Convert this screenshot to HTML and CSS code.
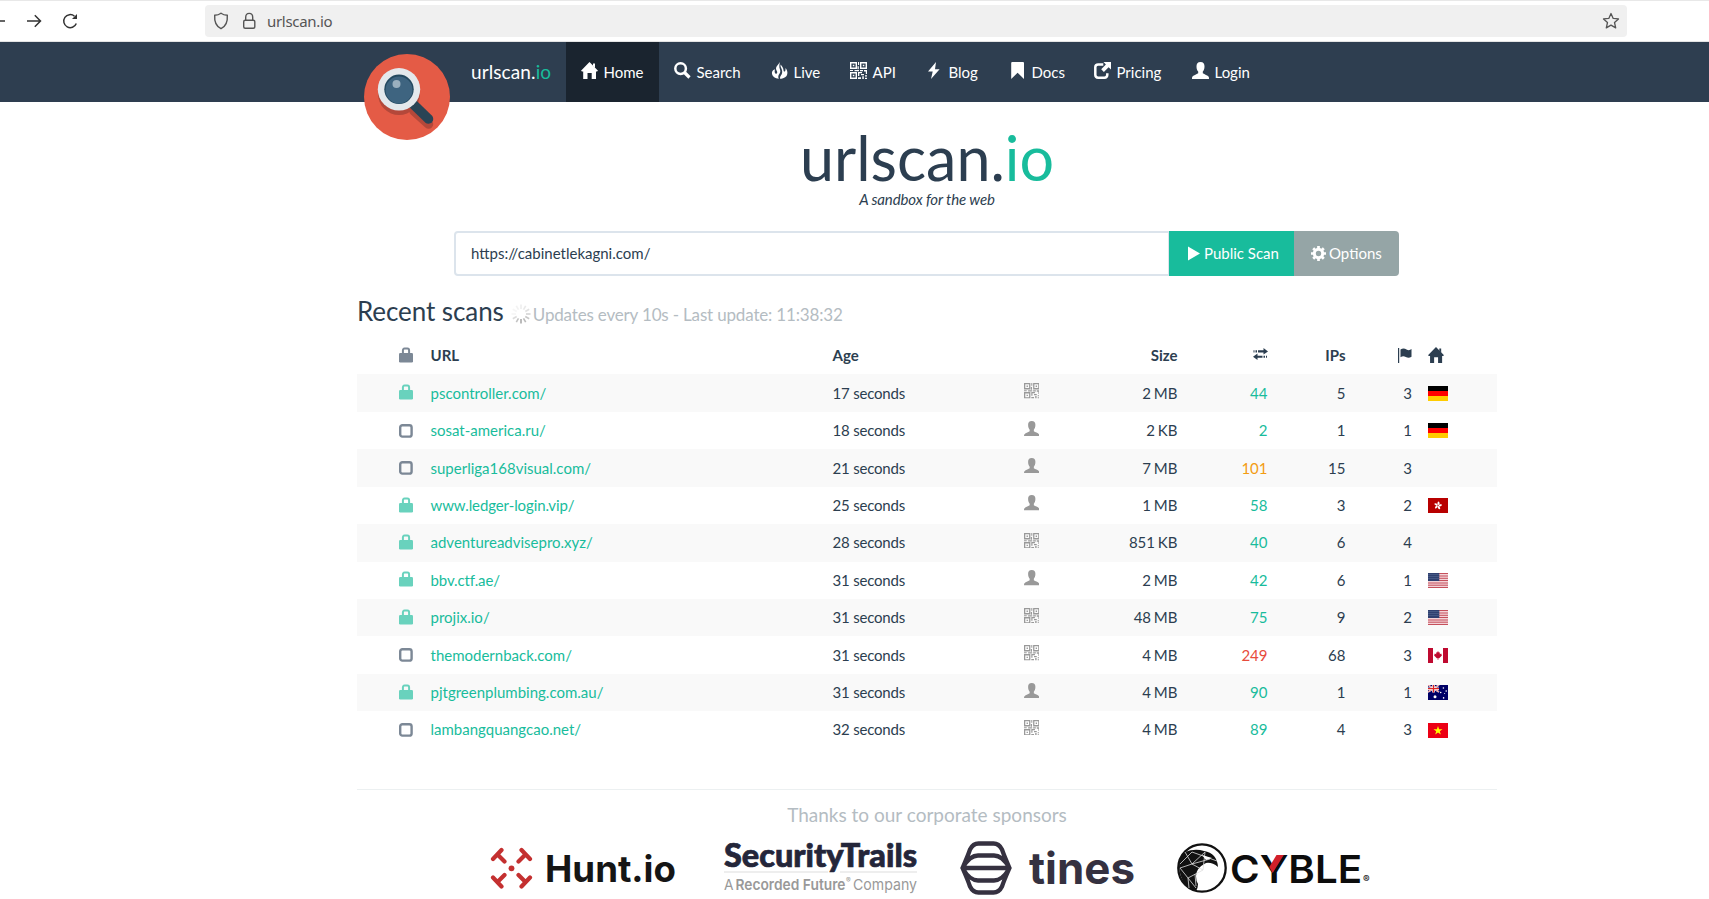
FILE: index.html
```html
<!DOCTYPE html>
<html lang="en">
<head>
<meta charset="utf-8">
<title>urlscan.io</title>
<link rel="stylesheet" href="styles.css">
</head>
<body>
<svg class="sprite" aria-hidden="true">
  <symbol id="home" viewBox="0 0 17 17"><path d="M8.500 0 17 8.800l-1 .7h-1V17h-4.300v-6H6.500v6H2.200V9.500H1L0 8.800z"/><path d="M12 1.500h2v4.500l-2-2z"/></symbol>
  <symbol id="search" viewBox="0 0 17 17"><circle cx="6.600" cy="6.600" r="5.300" fill="none" stroke="currentColor" stroke-width="2.500"/><path d="M10.500 10.500l5 5" stroke="currentColor" stroke-width="3.200"/></symbol>
  <symbol id="fire" viewBox="0 0 17 17"><path d="M9 0C7.500 2.600 4.800 4.400 5 6.800c.1 1.500 1.400 2.200 1.200 3.900C6 11.800 5 12.200 4.200 11.300c-.7-.9-.6-2.300-.2-4.100C1.600 8 .6 9.800 1 12c.5 2.700 3 4.300 6.800 4.700C6.900 15 7.300 13.300 8.300 12c1-1.300 1.400-2.700.6-4.700C8 5 8.300 2.500 9 0z"/><path d="M9.600 2.500c-.5 2.300.7 3.300 1.200 5 .8 2.300.4 4.300-.9 6-.9 1.400-1.100 2.100-.5 3.400 4-.3 6.400-2 6.900-4.800.5-2.600-.5-4.500-1.700-6.100-.1 1.400 0 3-.8 3.500-.8.400-1.300-.4-1.300-1.700C12.200 5.700 11 4 9.600 2.500z"/></symbol>
  <symbol id="qr" viewBox="0 0 17 17"><path fill-rule="evenodd" d="M0 0h7v7H0zM1.400 1.400v4.200h4.200V1.400zM2.800 2.800h1.500v1.500H2.800zM10 0h7v7h-7zM11.400 1.400v4.200h4.200V1.400zM12.800 2.800h1.500v1.500h-1.500zM0 10h7v7H0zM1.400 11.400v4.200h4.200v-4.200zM2.800 12.800h1.500v1.500H2.800zM8 0h1.100v3H8zM7.500 4.300h1.300v3H7.500zM0 8h3v1H0zM4.500 8H9v1.200H4.500zM8 10h4v1.300H9.300V14H8zM10 8h3v1.200h-3zM14 8h3v4h-1.200V9.500H14zM11 12h3v1.300h-3zM8 15.300h3V17H8zM12.300 14.300h1.500V17h-1.500zM15 13.300h2v1.200h-2zM15 15.700h2V17h-2z"/></symbol>
  <symbol id="bolt" viewBox="0 0 17 17"><path d="M10 0 2 9.500h4.700L5 17l8.600-9.800H9z"/></symbol>
  <symbol id="mark" viewBox="0 0 17 17"><path d="M2.200 1Q2.200 0 3.200 0H14q1 0 1 1v16l-6.400-6.200L2.200 17z"/></symbol>
  <symbol id="share" viewBox="0 0 17 17"><path d="M9.300 2.400H4.100Q1.300 2.400 1.300 5.200v7.600q0 2.900 2.900 2.900h6.200q2.900 0 2.900-2.900v-1.600" fill="none" stroke="currentColor" stroke-width="2.500"/><path d="M9.500 0H17v7.600l-2.400-2.400-4.700 4.700-2.700-2.700 4.700-4.700z"/></symbol>
  <symbol id="user" viewBox="0 0 17 17"><path d="M8.500 0C11.400 0 12.600 1.900 12.500 4.400c0 2.500-.7 3.900-1.700 5.200v1.700c1.600 1.100 5 2.100 5.900 3.400.3.600.3 2.300.3 2.300H0s0-1.700.3-2.300c.9-1.300 4.300-2.300 5.900-3.400V9.600C5.200 8.300 4.500 6.900 4.500 4.400 4.400 1.900 5.600 0 8.500 0z"/></symbol>
  <symbol id="lock" viewBox="0 0 14 16"><path d="M3.900 6.500V3.500Q3.900 1.600 5.500 1.600h3Q10.100 1.600 10.100 3.500v3" fill="none" stroke="currentColor" stroke-width="2"/><path d="M0 7.300Q0 6 1.200 6h11.600Q14 6 14 7.300v6.900q0 1.200-1.200 1.200H1.200Q0 15.400 0 14.200z"/></symbol>
  <symbol id="open" viewBox="0 0 14 14"><rect x="1.200" y="1.200" width="11.400" height="11.400" rx="2.200" fill="none" stroke="currentColor" stroke-width="2.400"/></symbol>
  <symbol id="transfer" viewBox="0 0 15 12"><path d="M.5 2.300h1v2.200h-1zM2.500 2.300H4v2.200H2.500zM5 2.300h5.500V0L15 3.400l-4.500 3.200V4.500H5zM14 7.700h-1v2.100h1zM12 7.700h-1.500v2.100H12zM9.500 9.800H4.500V12L0 8.700l4.500-3.200v2.200h5z"/></symbol>
  <symbol id="flag" viewBox="0 0 14 15"><path d="M0 0h1.200v15H0zM2.500 1.500c2-1.200 4-1.300 6 0s3.500.8 5-.4v7.600c-2 1.300-3.700 1.300-5.700.2-2-1-3.500-.8-5.300.3z"/></symbol>
  <symbol id="de" viewBox="0 0 20 15"><path d="M0 0h20v5H0z" fill="#000"/><path d="M0 5h20v5H0z" fill="#f00"/><path d="M0 10h20v5H0z" fill="#fc0"/></symbol>
  <symbol id="hk" viewBox="0 0 20 15"><path d="M0 0h20v15H0z" fill="#b80000"/><g fill="#fff"><ellipse cx="10.500" cy="5.300" rx="1" ry="1.800"/><ellipse cx="10.500" cy="5.300" rx="1" ry="1.800" transform="rotate(72 10 7.500)"/><ellipse cx="10.500" cy="5.300" rx="1" ry="1.800" transform="rotate(144 10 7.500)"/><ellipse cx="10.500" cy="5.300" rx="1" ry="1.800" transform="rotate(216 10 7.500)"/><ellipse cx="10.500" cy="5.300" rx="1" ry="1.800" transform="rotate(288 10 7.500)"/></g></symbol>
  <symbol id="us" viewBox="0 0 20 15"><path d="M0 0h20v15H0z" fill="#f3d3d8"/><path d="M0 .5h20M0 3h20M0 5.300h20M0 7.500h20M0 10h20M0 12.200h20M0 14.500h20" stroke="#c5505c"/><path d="M0 0h11.300v8H0z" fill="#304070"/><path d="M.5 1.500h10.500M.5 3.500h10.500M.5 5.500h10.500" stroke="#5b7198" stroke-dasharray="1 1"/></symbol>
  <symbol id="ca" viewBox="0 0 20 15"><path d="M0 0h20v15H0z" fill="#fff"/><path d="M0 0h5v15H0zM15 0h5v15h-5zM10 3l1 1.700 1-.4-.3 2 1.500-.8.700 1.900-2.700 2.800H10.300V12h-.600v-1.800H8.800L6.100 7.400l.7-1.900 1.500.8-.3-2 1 .4z" fill="#bf0a30"/></symbol>
  <symbol id="au" viewBox="0 0 20 15"><path d="M0 0h20v15H0z" fill="#006"/><path d="M0 0l11 7M11 0L0 7" stroke="#fff" stroke-width="1.600"/><path d="M0 0l11 7M11 0L0 7" stroke="#d33" stroke-width=".6"/><path d="M5.500 0v7.500M0 3.700h11" stroke="#fff" stroke-width="2.600"/><path d="M5.500 0v7.500M0 3.700h11" stroke="#d22" stroke-width="1.300"/><g fill="#fff"><circle cx="7" cy="11.700" r="1.500"/><circle cx="15.400" cy="3" r=".8"/><circle cx="12.700" cy="7.500" r=".8"/><circle cx="18.200" cy="6" r=".8"/><circle cx="15.600" cy="12.900" r=".8"/><circle cx="16.600" cy="8.600" r=".5"/></g></symbol>
  <symbol id="vn" viewBox="0 0 20 15"><path d="M0 0h20v15H0z" fill="#ec0015"/><path d="M10 3l1.100 3.300h3.400l-2.700 2 1 3.300-2.800-2-2.800 2 1-3.300-2.700-2h3.400z" fill="#ff0"/></symbol>
</svg>

<header class="browser">
  <div class="browser-nav">
    <svg width="80" height="20" viewBox="0 0 80 20" fill="none" stroke="#333" stroke-width="1.500"><path d="M0 10h5M27 10h13.500M34.800 4.300l5.700 5.700-5.700 5.700"/><path d="M76.300 12.500A6.500 6.500 0 1 1 74.500 5.200"/><path d="M77 3v5h-5z" fill="#333" stroke="none"/></svg>
  </div>
  <div class="address">
    <svg width="44" height="18" viewBox="0 0 44 18" fill="none" stroke="#555" stroke-width="1.400"><path d="M8 1.200c2 1.500 4.200 2 6.300 2.100C14.800 10 12 14.800 8 16.700 4 14.800 1.200 10 1.700 3.300 3.800 3.200 6 2.700 8 1.200z"/><rect x="30.700" y="8.200" width="11.100" height="8.100" rx="1.500"/><path d="M32.700 8V5.200q0-3.800 3.500-3.800t3.500 3.800V8"/></svg>
    <span class="address-text">urlscan.io</span>
    <svg class="star" width="18" height="18" viewBox="0 0 18 18" fill="none" stroke="#555" stroke-width="1.300" stroke-linejoin="round"><path d="M9 1.500l2.200 4.900 5.300.5-4 3.600 1.200 5.400L9 13.100l-4.700 2.800 1.200-5.400-4-3.600 5.300-.5z"/></svg>
  </div>
</header>

<nav class="navbar">
  <div class="logo-slot">
    <svg class="logo" width="86" height="86" viewBox="0 0 86 86"><circle cx="43" cy="43" r="43" fill="#e45b46"/><path d="M50 57l14.500 13" stroke="#b4483a" stroke-width="9.500" stroke-linecap="round"/><circle cx="35" cy="40" r="21" fill="#b4483a"/><path d="M48 49l16.500 16" stroke="#294455" stroke-width="9.500" stroke-linecap="round"/><circle cx="35" cy="35.300" r="21.200" fill="#e4e8ec"/><circle cx="35" cy="35.300" r="14.700" fill="#23485f"/><circle cx="35" cy="36" r="13.500" fill="#3e6480"/><circle cx="32.500" cy="30" r="4" fill="#9bb0bf"/></svg>
  </div>
  <a class="brand">urlscan.<b>io</b></a>
  <a class="item active w-home"><svg class="gi"><use href="#home"/></svg>Home</a>
  <a class="item w-search"><svg class="gi"><use href="#search"/></svg>Search</a>
  <a class="item w-live"><svg class="gi"><use href="#fire"/></svg>Live</a>
  <a class="item w-api"><svg class="gi"><use href="#qr"/></svg>API</a>
  <a class="item w-blog"><svg class="gi"><use href="#bolt"/></svg>Blog</a>
  <a class="item w-docs"><svg class="gi"><use href="#mark"/></svg>Docs</a>
  <a class="item w-pricing"><svg class="gi"><use href="#share"/></svg>Pricing</a>
  <a class="item"><svg class="gi"><use href="#user"/></svg>Login</a>
</nav>

<main class="container">
  <h1 class="title">urlscan.<span>io</span></h1>
  <p class="tagline">A sandbox for the web</p>
  <form class="scan">
    <div class="url-input">https://cabinetlekagni.com/</div>
    <div class="btn primary"><svg width="12" height="15" viewBox="0 0 12 15"><path d="M0 .5 12 7.500 0 14.500z"/></svg>Public Scan</div>
    <div class="btn options"><svg width="15" height="15" viewBox="0 0 15 15"><circle cx="7.500" cy="7.500" r="4.200" fill="none" stroke="currentColor" stroke-width="3"/><path d="M7.500 0v3M7.500 12v3M0 7.500h3M12 7.500h3M2.200 2.200l2 2M10.800 10.800l2 2M2.200 12.800l2-2M10.800 4.200l2-2" stroke="currentColor" stroke-width="2.700"/></svg>Options</div>
  </form>

  <h2 class="heading">Recent scans
    <svg class="spinner" width="20" height="20" viewBox="-10 -10 20 20" stroke="#aaa" stroke-width="1.600"><path d="M0-5v-4.500" opacity=".2"/><path d="M2.500-4.300 4.700-8.200" opacity=".25"/><path d="M4.300-2.500 8.200-4.700" opacity=".35"/><path d="M5 0h4.500" opacity=".5"/><path d="M4.300 2.500 8.200 4.700" opacity=".65"/><path d="M2.500 4.300 4.700 8.200" opacity=".8"/><path d="M0 5v4.500"/><path d="M-2.500 4.300-4.700 8.200" opacity=".7"/><path d="M-4.300 2.500-8.200 4.700" opacity=".4"/><path d="M-5 0h-4.500" opacity=".1"/><path d="M-4.300-2.500-8.200-4.700" opacity=".1"/><path d="M-2.500-4.300-4.700-8.200" opacity=".15"/></svg><small>Updates every 10s - Last update: 11:38:32</small></h2>

  <div class="table">
    <div class="row head"><i><svg class="lock gray"><use href="#lock"/></svg></i><span>URL</span><span>Age</span><i></i><span class="num">Size</span><span class="num"><svg class="transfer"><use href="#transfer"/></svg></span><span class="num">IPs</span><span class="num"><svg class="pennant"><use href="#flag"/></svg></span><span><svg class="house"><use href="#home"/></svg></span></div>
    <div class="row"><i><svg class="lock"><use href="#lock"/></svg></i><a>pscontroller.com/</a><span class="age">17 seconds</span><i><svg class="src"><use href="#qr"/></svg></i><span class="num">2 MB</span><span class="num ok">44</span><span class="num">5</span><span class="num">3</span><span><svg class="flag"><use href="#de"/></svg></span></div>
    <div class="row"><i><svg class="open"><use href="#open"/></svg></i><a>sosat-america.ru/</a><span class="age">18 seconds</span><i><svg class="src"><use href="#user"/></svg></i><span class="num">2 KB</span><span class="num ok">2</span><span class="num">1</span><span class="num">1</span><span><svg class="flag"><use href="#de"/></svg></span></div>
    <div class="row"><i><svg class="open"><use href="#open"/></svg></i><a>superliga168visual.com/</a><span class="age">21 seconds</span><i><svg class="src"><use href="#user"/></svg></i><span class="num">7 MB</span><span class="num warn">101</span><span class="num">15</span><span class="num">3</span><span></span></div>
    <div class="row"><i><svg class="lock"><use href="#lock"/></svg></i><a class="snug">www.ledger-login.vip/</a><span class="age">25 seconds</span><i><svg class="src"><use href="#user"/></svg></i><span class="num">1 MB</span><span class="num ok">58</span><span class="num">3</span><span class="num">2</span><span><svg class="flag"><use href="#hk"/></svg></span></div>
    <div class="row"><i><svg class="lock"><use href="#lock"/></svg></i><a>adventureadvisepro.xyz/</a><span class="age">28 seconds</span><i><svg class="src"><use href="#qr"/></svg></i><span class="num">851 KB</span><span class="num ok">40</span><span class="num">6</span><span class="num">4</span><span></span></div>
    <div class="row"><i><svg class="lock"><use href="#lock"/></svg></i><a class="snug">bbv.ctf.ae/</a><span class="age">31 seconds</span><i><svg class="src"><use href="#user"/></svg></i><span class="num">2 MB</span><span class="num ok">42</span><span class="num">6</span><span class="num">1</span><span><svg class="flag"><use href="#us"/></svg></span></div>
    <div class="row"><i><svg class="lock"><use href="#lock"/></svg></i><a>projix.io/</a><span class="age">31 seconds</span><i><svg class="src"><use href="#qr"/></svg></i><span class="num">48 MB</span><span class="num ok">75</span><span class="num">9</span><span class="num">2</span><span><svg class="flag"><use href="#us"/></svg></span></div>
    <div class="row"><i><svg class="open"><use href="#open"/></svg></i><a>themodernback.com/</a><span class="age">31 seconds</span><i><svg class="src"><use href="#qr"/></svg></i><span class="num">4 MB</span><span class="num bad">249</span><span class="num">68</span><span class="num">3</span><span><svg class="flag"><use href="#ca"/></svg></span></div>
    <div class="row"><i><svg class="lock"><use href="#lock"/></svg></i><a>pjtgreenplumbing.com.au/</a><span class="age">31 seconds</span><i><svg class="src"><use href="#user"/></svg></i><span class="num">4 MB</span><span class="num ok">90</span><span class="num">1</span><span class="num">1</span><span><svg class="flag"><use href="#au"/></svg></span></div>
    <div class="row"><i><svg class="open"><use href="#open"/></svg></i><a>lambangquangcao.net/</a><span class="age">32 seconds</span><i><svg class="src"><use href="#qr"/></svg></i><span class="num">4 MB</span><span class="num ok">89</span><span class="num">4</span><span class="num">3</span><span><svg class="flag"><use href="#vn"/></svg></span></div>
  </div>

  <footer class="sponsors">
    <p>Thanks to our corporate sponsors</p>
    <div class="logos">
      <svg width="186" height="59" viewBox="0 0 186 59"><g stroke="#c43030" stroke-width="4.200" stroke-linecap="round"><path d="M3 20l8.500-9M7.500 15.500l7 7M31.500 11l8.500 9M35.500 15.500l-7 7M3 38.500l8.500 9M7.500 43l7-7M31.500 47.500l8.500-9M35.500 43l-7-7"/></g><circle cx="21.500" cy="29.300" r="2.900" fill="#c43030"/><text x="55" y="42.500" class="hunt" textLength="131" lengthAdjust="spacingAndGlyphs">Hunt.io</text></svg>
      <svg width="194" height="59" viewBox="0 0 194 59"><path d="M0 33h104M116 33h77" stroke="#ddd"/><text x="0" y="28" class="st" textLength="193" lengthAdjust="spacingAndGlyphs">SecurityTrails</text><g class="rf"><text x="0" y="50.500" textLength="9.500" lengthAdjust="spacingAndGlyphs">A</text><text x="11.500" y="50.500" class="rf-b" textLength="110" lengthAdjust="spacingAndGlyphs">Recorded Future</text><text x="122" y="43.500" class="reg">®</text><text x="129" y="50.500" textLength="64" lengthAdjust="spacingAndGlyphs">Company</text></g></svg>
      <svg width="176" height="59" viewBox="0 0 176 59"><g fill="none" stroke="#353140" stroke-width="4.300"><path d="M2.500 29Q8 16.500 10 10.500 13 4.500 18.500 4.500h15q5.500 0 8.500 6 2 6 7.500 18.500Q44 41.500 42 47.500q-3 6-8.500 6h-15Q13 53.500 10 47.500 8 41.500 2.500 29zM2.500 29H49.500M3 28Q10 16.500 18 16.500h16q8 0 15 11.500M3 30Q10 41.500 18 41.500h16q8 0 15-11.500"/></g><text x="69" y="45" class="tines" textLength="106" lengthAdjust="spacingAndGlyphs">tines</text></svg>
      <svg width="194" height="59" viewBox="0 0 194 59"><circle cx="25" cy="29" r="23.700" fill="#fff" stroke="#111" stroke-width="2.300"/><path d="M2 28Q3 17 8 13q10-4 19-1 13 2 14 16-6-5-12-4-10 5-10 13 0 5 2 8 0 4-2 7Q4 48 2 28z" fill="#111"/><path d="M8 13l7 12 13-12M15 25L3 29l8 10 15-8-11-6M11 39l8 10M11 39l1 10M28 13l-2 18M15 13L3 25M15 13l25 9M15 25l18-5M19 47l-1-12" fill="none" stroke="#ddd" stroke-width=".8"/><path d="M25 16l10 3-6 2z" fill="#fff"/><text x="53" y="43.500" class="cyble" textLength="132" lengthAdjust="spacingAndGlyphs">CYBLE</text><path d="M99.500 16h7.300L95.700 34l-3.400-6z" fill="#d2202a"/><text x="186" y="44" class="cyble-reg">®</text></svg>
    </div>
  </footer>
</main>
</body>
</html>
```

FILE: styles.css
```css
* { box-sizing: border-box; }
body { margin: 0; height: 899px; overflow: hidden; background: #fff; color: #2c3e50; font: 15px/21.43px Lato, sans-serif; }
svg { display: block; fill: currentColor; flex: none; }
.sprite { width: 0; height: 0; position: absolute; }

.browser { height: 42px; display: flex; align-items: center; border-top: 1px solid #e8e8e8; border-bottom: 1px solid #e4e4e4; background: #fff; }
.browser-nav { width: 205px; }
.browser-nav svg { fill: none; }
.address { width: 1422px; height: 32px; display: flex; align-items: center; padding: 0 7px 0 8px; border-radius: 4px; background: #f0f0f0; }
.address svg { fill: none; }
.address-text { margin-left: 10px; font: 15px/20px "Noto Sans", sans-serif; letter-spacing: -.3px; color: #555; }
.star { margin-left: auto; }

.navbar { height: 60px; display: flex; background: #2e3e50; color: #fff; padding-left: 357px; }
.logo-slot { width: 99px; padding: 12px 0 0 7px; }
.logo { position: relative; z-index: 1; }
.brand { width: 110px; padding: 19px 15px; font-size: 19px; letter-spacing: .1px; white-space: nowrap; }
.brand b { font-weight: 400; color: #18bc9c; }
.item { display: flex; gap: 5.500px; padding: 20px 14px 0 15px; white-space: nowrap; }
.active { background: #1a242f; }
.gi { width: 17px; height: 17px; }
.w-home { width: 93px; }
.w-search { width: 97px; }
.w-live { width: 79px; }
.w-api { width: 76px; }
.w-blog { width: 83px; }
.w-docs { width: 85px; }
.w-pricing { width: 98px; }

.container { width: 1140px; margin-left: 357px; }
.title { margin: 0; padding-top: 23px; height: 87px; font-size: 61px; line-height: 66px; font-weight: 400; text-align: center; }
.title span { color: #18bc9c; }
.tagline { margin: 0; height: 42px; font-style: italic; letter-spacing: -.12px; text-align: center; }
.scan { display: flex; height: 45px; margin: 0 98px 0 97px; }
.url-input { flex: 1; padding: 10px 15px; border: 2px solid #dce4ec; border-right-width: 1px; border-radius: 4px 0 0 4px; }
.btn { display: flex; align-items: center; color: #fff; }
.primary { width: 125px; padding-left: 19px; gap: 4px; background: #18bc9c; }
.options { width: 105px; padding-left: 17px; gap: 3px; background: #95a5a6; border-radius: 0 4px 4px 0; }
.heading { display: flex; align-items: baseline; height: 61px; margin: 0; padding-top: 19px; font-size: 26px; letter-spacing: -.08px; line-height: 32px; font-weight: 400; white-space: nowrap; }
.heading small { font-size: 17px; letter-spacing: -.17px; color: #b4bcc2; }
.spinner { margin: 0 2px 0 7px; align-self: flex-start; position: relative; top: 9px; }

.row { display: grid; grid-template-columns: 65.5px 402px 191px 100px 70px 90px 78px 66.500px 1fr; height: 37.430px; align-items: center; }
.row > * { padding: 0 8px; white-space: nowrap; }
.row:nth-child(even) { background: #f9f9f9; }
.row:not(.head) { padding-top: .5px; }
.head { font-weight: 700; }
.num { display: flex; justify-content: flex-end; word-spacing: -1px; }
.age { letter-spacing: -.2px; }
.snug { letter-spacing: -.1px; }
.row a, .ok { color: #18bc9c; }
.warn { color: #f39c12; }
.bad { color: #e74c3c; }
.lock { width: 14px; height: 16px; margin-left: 34px; margin-top: -2px; color: #69d2bd; }
.gray { color: #7c8896; }
.open { width: 14px; height: 14px; margin-left: 34px; color: #7c8896; }
.src { width: 15.500px; height: 15.500px; margin-top: -5px; color: #999; }
.transfer { width: 15px; height: 12px; margin-top: -3px; }
.pennant { width: 14px; height: 15px; margin-top: -1px; }
.house { width: 16px; height: 16px; margin-top: -2px; }
.flag { width: 20px; height: 15px; }

.sponsors { margin-top: 40px; border-top: 1px solid #ecf0f1; }
.sponsors p { margin: 0; padding-top: 13px; height: 49px; font-size: 19px; line-height: 24px; text-align: center; color: #b4bcc2; }
.logos { display: flex; padding-left: 133px; }
.logos svg { overflow: visible; }
.logos svg:nth-child(1) { margin-right: 48px; }
.logos svg:nth-child(2) { margin-right: 42px; }
.logos svg:nth-child(3) { margin-right: 41px; }
.hunt { font: 700 37px Inter, sans-serif; fill: #151515; }
.st { font: 900 31.500px Lato, sans-serif; fill: #24263a; stroke: #24263a; stroke-width: .7px; }
.rf { font: 15px Inter, sans-serif; fill: #999; }
.rf-b { font-weight: 600; }
.reg { font-size: 7px; }
.tines { font: 700 44px Inter, sans-serif; fill: #353140; }
.cyble { font: 600 38px Inter, sans-serif; fill: #0c0c0c; }
.cyble-reg { font: 700 10px Inter, sans-serif; fill: #222; }
```
